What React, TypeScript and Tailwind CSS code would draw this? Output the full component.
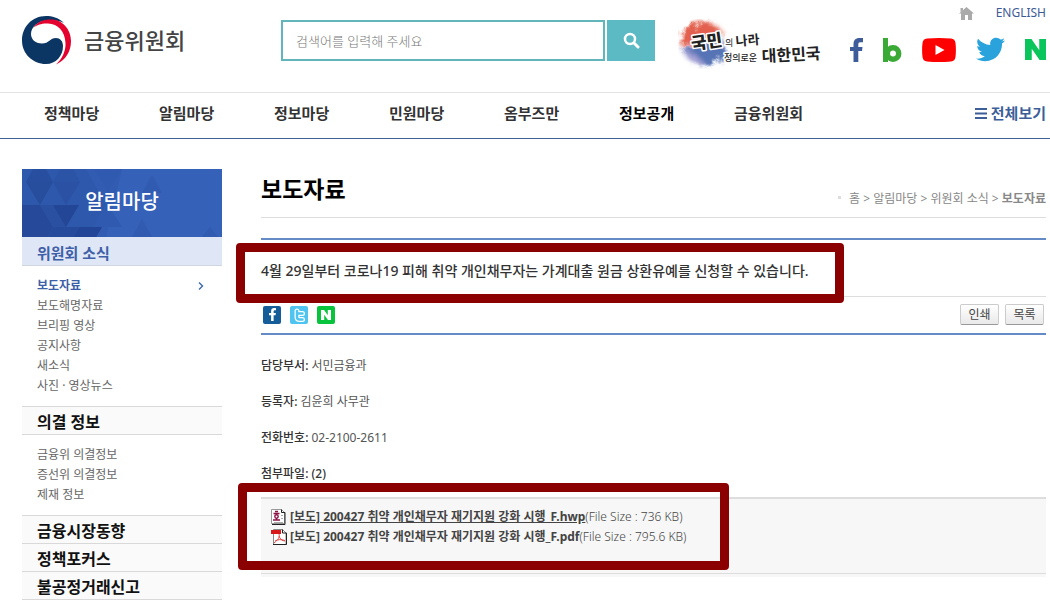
import type { ReactNode } from 'react'
import { FaFacebookF, FaTwitter } from 'react-icons/fa'
import { SiNaver } from 'react-icons/si'

const mainMenu = ['정책마당', '알림마당', '정보마당', '민원마당', '옴부즈만', '정보공개', '금융위원회']

const newsMenu = ['보도자료', '보도해명자료', '브리핑 영상', '공지사항', '새소식', '사진 · 영상뉴스']

const decisionMenu = ['금융위 의결정보', '증선위 의결정보', '제재 정보']

const details = [
  { label: '담당부서', value: '서민금융과' },
  { label: '등록자', value: '김윤희 사무관' },
  { label: '전화번호', value: '02-2100-2611' },
]

function Emblem() {
  return (
    <svg width="50" height="49" viewBox="0 0 50 49" aria-hidden="true">
      <path
        d="M42 7C36 1.500 30 0 24 0C10 0 0 11 0 24.500C0 38 11 48 24 48C34 48 41 40 41 30C41 25 38 22 34 22C28 22 27 27.500 20 27.500C13 27.500 9 23 9 18C9 11 16 5 25 4.500C32 4 38 5 42 7Z"
        fill="#0b3563"
      />
      <path
        d="M11 12C15 6 21 3.500 29 3.500C41 3.500 49 14 49 25C49 35 44 44 34 48.500C40 43 44 35 43.500 27C43 15 36 8 26 7.500C20 7.200 14 9 11 12Z"
        fill="#e4032e"
      />
    </svg>
  )
}

function Slogan() {
  return (
    <svg
      width="144"
      height="50"
      viewBox="0 0 144 50"
      role="img"
      aria-label="국민의 나라 정의로운 대한민국"
      fontFamily="'Noto Sans CJK KR', sans-serif"
      fontWeight="900"
      fill="#222"
    >
      <defs>
        <filter id="brush" x="-20%" y="-20%" width="140%" height="140%">
          <feGaussianBlur stdDeviation="2" result="soft" />
          <feTurbulence type="fractalNoise" baseFrequency="0.12" numOctaves="3" />
          <feDisplacementMap in="soft" scale="10" />
        </filter>
      </defs>
      <g filter="url(#brush)">
        <path d="M3 27C2 10 14 3 25 3C36 3 44 9 45 18C32 17 24 27 3 27Z" fill="#e2604e" />
        <path d="M5 30C18 30 26 18 47 23C52 34 42 46 28 46C17 47 8 40 5 30Z" fill="#5673b5" />
        <path d="M4 31C9 42 18 46 27 45L16 35Z" fill="#a5a2d5" />
      </g>
      <g stroke="#fff" strokeWidth="3" paintOrder="stroke" strokeLinejoin="round">
        <text x="14" y="31" fontSize="17" transform="rotate(-8 14 31)">국민</text>
        <text x="47" y="27" fontSize="9" fontWeight="400">의</text>
        <text x="58" y="27" fontSize="13" fontWeight="700" transform="rotate(-5 58 27)">나라</text>
        <text x="46" y="42" fontSize="9" fontWeight="500">정의로운</text>
        <text x="84" y="43" fontSize="16" fontWeight="700" transform="rotate(-3 84 43)">대한민국</text>
      </g>
    </svg>
  )
}

function SocialLinks() {
  return (
    <div className="flex items-center justify-between">
      <a href="#facebook" aria-label="페이스북" className="text-[#3e5c9a]">
        <svg width="13" height="24" viewBox="0 0 13 24" aria-hidden="true">
          <path
            d="M13 0H9.500C5.500 0 3.500 2.300 3.500 6V9H0V13H3.500V24H8.300V13H12L12.500 9H8.300V6.500C8.300 5 8.900 4.300 10.300 4.300H13Z"
            fill="currentColor"
          />
        </svg>
      </a>
      <a href="#blog" aria-label="블로그">
        <svg width="19" height="24" viewBox="0 0 19 24" fill="none" stroke="#3aa935" aria-hidden="true">
          <path d="M2.500 0V24" strokeWidth="5" />
          <circle cx="10" cy="15.500" r="5.700" strokeWidth="5.500" />
        </svg>
      </a>
      <a href="#youtube" aria-label="유튜브">
        <svg width="34" height="24" viewBox="0 0 34 24" aria-hidden="true">
          <path
            d="M5 .5Q17-.5 29 .5Q33 .8 33.500 5Q34.300 12 33.500 19Q33 23.200 29 23.500Q17 24.500 5 23.500Q1 23.200 .5 19Q-.3 12 .5 5Q1 .8 5 .5Z"
            fill="#f00"
          />
          <path d="M13.500 7L22.500 12L13.500 17Z" fill="#fff" />
        </svg>
      </a>
      <a href="#twitter" aria-label="트위터" className="text-[#2aa3dc]">
        <FaTwitter size={29} />
      </a>
      <a href="#naver" aria-label="네이버" className="text-[#0ac55b]">
        <SiNaver size={21} />
      </a>
    </div>
  )
}

function HwpIcon() {
  return (
    <svg width="16" height="16" viewBox="0 0 16 16" className="shrink-0" aria-hidden="true">
      <path d="M.5 .5H10.500L13.500 3.500V14.500H.5Z" fill="#fff" stroke="#999" />
      <path d="M10.500 .5V3.500H14V15.500H1" fill="none" stroke="#222" />
      <path d="M10 6.500H12M10 9.500H12M3 13.500H12" stroke="#aaa" />
      <path d="M4 2.500H7M2.500 4.500H8.500M5.500 9V11M2 11H9" stroke="#8c1245" strokeWidth="1.400" />
      <circle cx="5.500" cy="7.500" r="1.700" fill="none" stroke="#8c1245" strokeWidth="1.400" />
    </svg>
  )
}

function PdfIcon() {
  return (
    <svg width="16" height="16" viewBox="0 0 16 16" className="shrink-0" aria-hidden="true">
      <path d="M2.500 .5H11.500L15 4V15.500H2.500Z" fill="#fff" stroke="#888" />
      <path d="M11.500 .5V4H15.500V15.500H2" fill="none" stroke="#222" />
      <path d="M0 1H10V5H0Z" fill="#d81818" />
      <path
        d="M8 5C9 8 7 11 3 14M8 7C9 10 11 12 14 12M4 12C7 10.500 10 10 14 11.500"
        fill="none"
        stroke="#e04848"
      />
    </svg>
  )
}

function SiteHeader() {
  return (
    <header className="flex h-[92px] items-start pr-1 pl-[22px]">
      <a href="#home" className="mt-4 flex w-[259px] shrink-0 items-center gap-3">
        <Emblem />
        <span className="text-[22px] font-medium text-[#444]">금융위원회</span>
      </a>
      <form className="mt-5 flex flex-1 gap-0.5" onSubmit={(e) => e.preventDefault()}>
        <input
          type="text"
          aria-label="검색어"
          placeholder="검색어를 입력해 주세요"
          className="h-[41px] min-w-0 flex-1 border-2 border-[#62b5ba] px-[13px] text-[13px] font-light outline-none placeholder:text-[#777]"
        />
        <button
          type="submit"
          aria-label="검색"
          className="flex h-[41px] w-12 items-center justify-center bg-[#5bbac3]"
        >
          <svg width="17" height="17" viewBox="0 0 17 17" fill="none" stroke="#fff" aria-hidden="true">
            <circle cx="7" cy="7" r="5" strokeWidth="2.500" />
            <path d="M11 11L15 15" strokeWidth="3" strokeLinecap="round" />
          </svg>
        </button>
      </form>
      <a href="#slogan" className="mt-[19px] ml-[23px] shrink-0">
        <Slogan />
      </a>
      <div className="ml-7 flex w-[196px] shrink-0 flex-col gap-[13px] pt-1">
        <div className="flex items-center justify-end gap-[22px] text-[12px] leading-[18px] text-[#3d5b96]">
          <a href="#home" aria-label="홈">
            <svg width="15" height="13" viewBox="0 0 15 13" fill="#aaa" aria-hidden="true">
              <path d="M7.500 0L15 6.500H13V13H9V8H6V13H2V6.500H0ZM1.500 1H4V3L1.500 5Z" />
            </svg>
          </a>
          <a href="#english">ENGLISH</a>
        </div>
        <SocialLinks />
      </div>
    </header>
  )
}

function MainNav() {
  return (
    <nav className="flex h-[47px] items-center justify-between border-t border-b border-t-[#e4e4e4] border-b-[#3f5f95] pr-1 pb-1 pl-11 text-[15px] font-bold text-[#333]">
      <ul className="flex">
        {mainMenu.map((name) => (
          <li key={name} className="w-[115px]">
            <a href="#menu" className={name === '정보공개' ? 'text-black' : ''}>
              {name}
            </a>
          </li>
        ))}
      </ul>
      <button type="button" className="flex items-center gap-1 text-[#3d5f99]">
        <svg width="12" height="11" viewBox="0 0 12 11" stroke="currentColor" strokeWidth="2" aria-hidden="true">
          <path d="M0 1H12M0 5.500H12M0 10H12" />
        </svg>
        전체보기
      </button>
    </nav>
  )
}

function SideHeading({ children, first = false }: { children: ReactNode; first?: boolean }) {
  return (
    <h3
      className={`border-b border-[#d9d9d9] bg-[#fafafa] pt-1 pl-[15px] text-[16px] leading-[23px] font-bold text-[#111] ${
        first ? 'border-t' : ''
      }`}
    >
      <a href="#section">{children}</a>
    </h3>
  )
}

function Sidebar() {
  return (
    <aside className="w-[200px] shrink-0">
      <div className="relative h-[68px] overflow-hidden bg-[#3561b8]">
        <svg className="absolute inset-0" width="200" height="68" viewBox="0 0 200 68" aria-hidden="true">
          <path d="M0 0H100L84 68H0Z" fill="#315cb2" />
          <path d="M0 0H64L84 36L66 68H0Z" fill="#2e58ac" />
          <path d="M4 13L11 0H24L31 13Z" fill="#284f9f" />
          <path d="M31 13L38 0H51L58 13Z" fill="#2b54a6" />
          <path d="M4 13H31L18 36Z" fill="#274d9d" />
          <path d="M31 13H58L44 36Z" fill="#2a51a3" />
          <path d="M0 36H18L31 58L26 68H0Z" fill="#26499a" />
          <path d="M18 36H31L44 58H31Z" fill="#2a50a2" />
          <path d="M31 36H57L44 58Z" fill="#234696" />
          <path d="M26 68L31 58H80L74 68Z" fill="#264b9d" />
          <path d="M52 68L58 58H80L74 68Z" fill="#224598" />
          <path d="M72 0H100L86 22ZM86 36L100 58H72Z" fill="#2f5aaf" />
          <path d="M130 6L140 24H120ZM110 68L120 50L130 68ZM180 68L188 58L196 68Z" fill="#315bb0" />
        </svg>
        <h2 className="relative text-center text-[20px] leading-[66px] font-medium text-white">알림마당</h2>
      </div>
      <h3 className="border-b border-[#d0d5e0] bg-[#dfe6f5] pt-[5px] pl-[15px] text-[15px] leading-[23px] font-bold text-[#3f5fa8]">
        <a href="#news">위원회 소식</a>
      </h3>
      <ul className="pt-[10px] pr-[18px] pb-[10px] pl-[15px] text-[12px] leading-5 text-[#666]">
        {newsMenu.map((name, i) => (
          <li key={name}>
            <a
              href="#news"
              className={i === 0 ? 'flex items-center justify-between font-bold text-[#3d5fa8]' : ''}
            >
              {name}
              {i === 0 && (
                <svg width="6" height="8" viewBox="0 0 6 8" fill="none" stroke="#4470a8" aria-hidden="true">
                  <path d="M1 .5L4.500 4L1 7.500" strokeWidth="1.500" />
                </svg>
              )}
            </a>
          </li>
        ))}
      </ul>
      <SideHeading first>의결 정보</SideHeading>
      <ul className="pt-[10px] pb-[10px] pl-[15px] text-[12px] leading-5 text-[#666]">
        {decisionMenu.map((name) => (
          <li key={name}>
            <a href="#decision">{name}</a>
          </li>
        ))}
      </ul>
      <SideHeading first>금융시장동향</SideHeading>
      <SideHeading>정책포커스</SideHeading>
      <SideHeading>불공정거래신고</SideHeading>
    </aside>
  )
}

function ShareBar() {
  return (
    <div className="flex items-center justify-between pr-0.5 pl-0.5">
      <div className="flex gap-[9px]">
        <a
          href="#share-facebook"
          aria-label="페이스북 공유"
          className="flex size-[18px] items-center justify-center rounded-xs bg-[#155d98] text-white"
        >
          <FaFacebookF size={13} />
        </a>
        <a href="#share-twitter" aria-label="트위터 공유" className="size-[18px] rounded-xs bg-[#4fc4f0]">
          <svg width="18" height="18" viewBox="0 0 18 18" fill="none" aria-hidden="true">
            <path d="M7 5V11Q7 13.500 9.500 13.500H12.500M7 7.500H12.500" stroke="#fff" strokeWidth="5" strokeLinecap="round" />
            <path d="M7 5V11Q7 13.500 9.500 13.500H12.500M7 7.500H12.500" stroke="#4fc4f0" strokeWidth="2.500" strokeLinecap="round" />
          </svg>
        </a>
        <a
          href="#share-naver"
          aria-label="네이버 공유"
          className="flex size-[18px] items-center justify-center rounded-xs bg-[#08c43c] text-white"
        >
          <SiNaver size={10} />
        </a>
      </div>
      <div className="flex gap-1.5 text-[12px] text-[#444]">
        {['인쇄', '목록'].map((name) => (
          <button
            key={name}
            type="button"
            className="h-[21px] w-[39px] rounded-xs border border-[#ccc] border-b-[#999] bg-linear-to-b from-white to-[#e9e9e9] leading-[18px]"
          >
            {name}
          </button>
        ))}
      </div>
    </div>
  )
}

function Attachment({ icon, name, size, underline }: { icon: ReactNode; name: string; size: string; underline?: boolean }) {
  return (
    <li className="flex h-5 items-center gap-[3px]">
      {icon}
      <span>
        <a href="#download" className={underline ? 'font-bold underline' : 'font-bold'}>
          {name}
        </a>
        <span className="font-light">(File Size : {size})</span>
      </span>
    </li>
  )
}

function Article() {
  return (
    <main className="min-w-0 flex-1">
      <div className="flex h-[49px] items-start justify-between border-b border-[#ddd]">
        <h1 className="text-[23px] leading-10 font-bold text-black">보도자료</h1>
        <p className="flex items-center gap-2 pt-5 text-[12px] leading-5 text-[#888]">
          <span className="mb-1 size-[3px] bg-[#ddd]" />
          <span>
            홈 &gt; 알림마당 &gt; 위원회 소식 &gt; <strong>보도자료</strong>
          </span>
        </p>
      </div>

      <div className="relative mt-5 border-t-2 border-[#658bc7]">
        <h2 className="h-[57px] border-b border-[#ddd] text-[14px] leading-[62px] font-medium text-[#333]">
          4월 29일부터 코로나19 피해 취약 개인채무자는 가계대출 원금 상환유예를 신청할 수 있습니다.
        </h2>
        <div className="pointer-events-none absolute top-[3px] -left-[25px] h-[60px] w-[608px] rounded-[4px] border-9 border-[#8b0000]" />
      </div>
      <div className="border-b-2 border-[#658bc7] pt-[7px] pb-2">
        <ShareBar />
      </div>

      <dl className="mt-[21px] flex flex-col gap-4 text-[12px] leading-5 text-[#555]">
        {details.map(({ label, value }) => (
          <div key={label} className="flex gap-[3px]">
            <dt className="font-medium text-[#333]">{label}:</dt>
            <dd>{value}</dd>
          </div>
        ))}
        <div>
          <dt className="font-medium text-[#333]">첨부파일: (2)</dt>
        </div>
      </dl>

      <div className="relative mt-[13px] border-t-2 border-[#ddd] bg-[#f7f7f7] pb-[3px]">
        <ul className="border-b border-[#ddd] pt-2 pb-[26px] pl-[10px] text-[12px] leading-5 text-[#444]">
          <Attachment
            icon={<HwpIcon />}
            name="[보도] 200427 취약 개인채무자 재기지원 강화 시행_F.hwp"
            size="736 KB"
            underline
          />
          <Attachment
            icon={<PdfIcon />}
            name="[보도] 200427 취약 개인채무자 재기지원 강화 시행_F.pdf"
            size="795.6 KB"
          />
        </ul>
        <div className="pointer-events-none absolute -top-4 -left-[23px] h-[87px] w-[491px] rounded-[4px] border-9 border-[#8b0000]" />
      </div>
    </main>
  )
}

export default function App() {
  return (
    <div className="bg-white font-['Noto_Sans','Noto_Sans_CJK_KR',sans-serif]">
      <SiteHeader />
      <MainNav />
      <div className="flex gap-[39px] pt-[30px] pr-1 pl-[22px]">
        <Sidebar />
        <Article />
      </div>
    </div>
  )
}
